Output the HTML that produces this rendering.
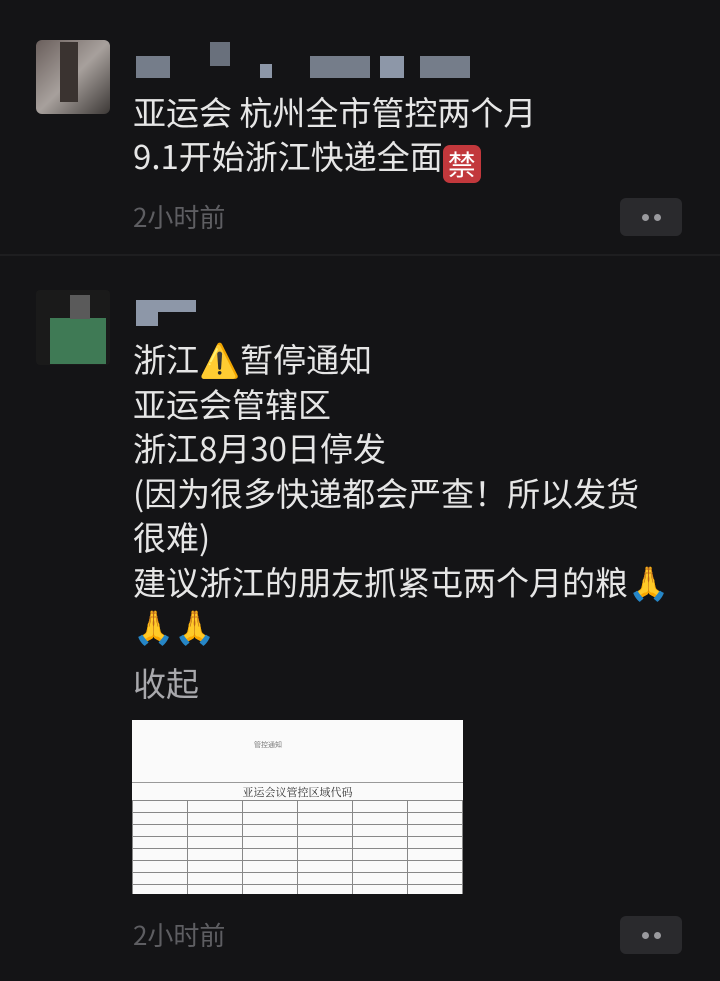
<!DOCTYPE html>
<html><head><meta charset="utf-8"><style>
body{margin:0;width:720px;height:981px;background:#141416;overflow:hidden;font-family:"Noto Sans CJK SC","Liberation Sans",sans-serif;position:relative;color:#e6e6e6}
.a{position:absolute}
.t{position:absolute;left:133px;font-size:33px;line-height:44.5px;white-space:nowrap}
.ts{position:absolute;left:133px;font-size:26px;color:#5e5e62}
.btn{position:absolute;left:620px;width:62px;height:38px;background:#2a2a2d;border-radius:6px}
.btn i{position:absolute;top:16px;width:7px;height:7px;border-radius:50%;background:#9a9a9e}
.px{position:absolute;background:#8d97a8}
table{border-collapse:collapse;font-size:6px;color:#666;width:100%}
td{border:1px solid #888;height:9px}
</style></head><body>
<div class="a" style="left:36px;top:40px;width:74px;height:74px;border-radius:6px;background:linear-gradient(135deg,#6a5f5c,#a7a09c 50%,#3c3836);"></div>
<div class="a" style="left:60px;top:42px;width:18px;height:60px;background:#3a3330"></div>
<div class="px" style="left:136px;top:56px;width:34px;height:22px;opacity:.8"></div>
<div class="px" style="left:210px;top:42px;width:20px;height:24px;opacity:.7"></div>
<div class="px" style="left:260px;top:64px;width:12px;height:14px"></div>
<div class="px" style="left:310px;top:56px;width:60px;height:22px;opacity:.8"></div>
<div class="px" style="left:380px;top:56px;width:24px;height:22px"></div>
<div class="px" style="left:420px;top:56px;width:50px;height:22px;opacity:.8"></div>
<div class="t" style="top:89px">亚运会 杭州全市管控两个月</div>
<div class="t" style="top:133px">9.1开始浙江快递全面<span style="display:inline-block;width:38px;height:38px;background:#c2383c;border-radius:7px;color:#fff;font-size:28px;line-height:38px;text-align:center;vertical-align:-6px">禁</span></div>
<div class="ts" style="top:198px">2小时前</div>
<div class="btn" style="top:198px"><i style="left:22px"></i><i style="left:34px"></i></div>
<div class="a" style="left:0;top:254px;width:720px;height:2px;background:#1e1e20"></div>
<div class="a" style="left:36px;top:290px;width:74px;height:75px;border-radius:4px;background:#1a1a1a"></div>
<div class="a" style="left:50px;top:318px;width:56px;height:46px;background:#3f7a55"></div>
<div class="a" style="left:70px;top:295px;width:20px;height:24px;background:#5a5a5a"></div>
<div class="px" style="left:136px;top:300px;width:22px;height:26px"></div>
<div class="px" style="left:158px;top:300px;width:38px;height:12px"></div>
<div class="t" style="top:336px">浙江⚠️暂停通知</div>
<div class="t" style="top:381px">亚运会管辖区</div>
<div class="t" style="top:425px">浙江8月30日停发</div>
<div class="t" style="top:470px">(因为很多快递都会严查！所以发货</div>
<div class="t" style="top:514px">很难)</div>
<div class="t" style="top:559px">建议浙江的朋友抓紧屯两个月的粮🙏</div>
<div class="t" style="top:603px">🙏🙏</div>
<div class="t" style="top:660px;color:#a8a8ac">收起</div>
<div class="a" style="left:132px;top:720px;width:331px;height:174px;background:#fafafa;overflow:hidden">
<div style="position:absolute;left:122px;top:20px;font-size:7px;color:#777">管控通知</div>
<div style="position:absolute;left:0;top:62px;width:331px;border-top:1px solid #999"></div>
<div style="position:absolute;left:0;top:64px;width:331px;text-align:center;font-size:11px;color:#333;font-family:'Noto Serif CJK SC',serif">亚运会议管控区域代码</div>
<div style="position:absolute;left:0;top:80px;width:331px">
<table><tr><td></td><td></td><td></td><td></td><td></td><td></td></tr><tr><td></td><td></td><td></td><td></td><td></td><td></td></tr><tr><td></td><td></td><td></td><td></td><td></td><td></td></tr><tr><td></td><td></td><td></td><td></td><td></td><td></td></tr><tr><td></td><td></td><td></td><td></td><td></td><td></td></tr><tr><td></td><td></td><td></td><td></td><td></td><td></td></tr><tr><td></td><td></td><td></td><td></td><td></td><td></td></tr><tr><td></td><td></td><td></td><td></td><td></td><td></td></tr><tr><td></td><td></td><td></td><td></td><td></td><td></td></tr><tr><td></td><td></td><td></td><td></td><td></td><td></td></tr></table>
</div></div>
<div class="ts" style="top:916px">2小时前</div>
<div class="btn" style="top:916px"><i style="left:22px"></i><i style="left:34px"></i></div>
</body></html>
